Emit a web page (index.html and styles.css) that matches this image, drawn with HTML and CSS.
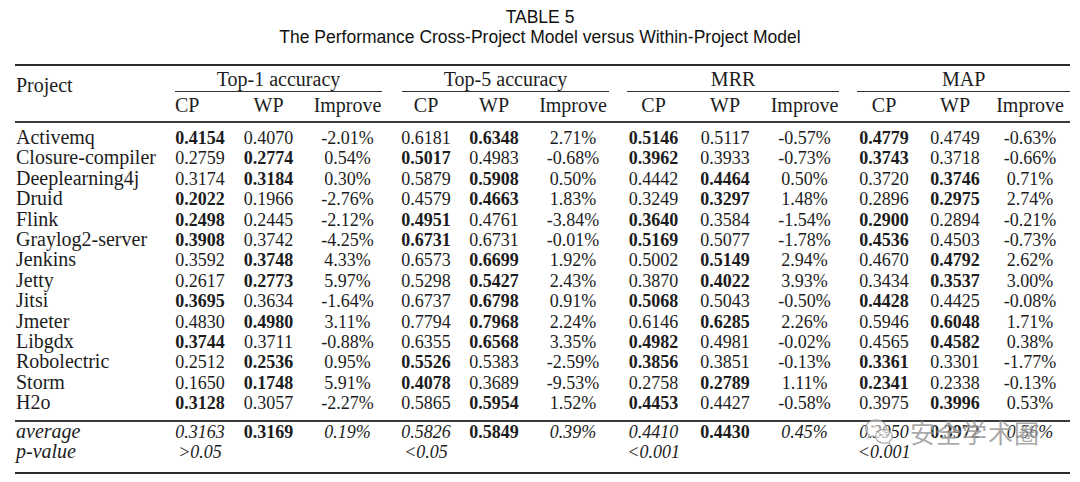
FILE: index.html
```html
<!DOCTYPE html>
<html lang="en">
<head>
<meta charset="utf-8">
<title>TABLE 5</title>
<link rel="stylesheet" href="styles.css">
</head>
<body>
<div class="caption">
  <div>TABLE 5</div>
  <div>The Performance Cross-Project Model versus Within-Project Model</div>
</div>
<div class="wrap">
<table class="results">
  <colgroup>
    <col class="c-proj"><col class="c68"><col class="c69"><col class="c89">
    <col class="c68"><col class="c68"><col class="c90">
    <col class="c71"><col class="c72"><col class="c87">
    <col class="c72"><col class="c70"><col class="c80">
  </colgroup>
  <thead>
    <tr class="grp">
      <th class="proj" rowspan="2">Project</th>
      <th colspan="3"><div class="cmid g1">Top-1 accuracy</div></th>
      <th colspan="3"><div class="cmid g2">Top-5 accuracy</div></th>
      <th colspan="3"><div class="cmid g3">MRR</div></th>
      <th colspan="3"><div class="cmid g4">MAP</div></th>
    </tr>
    <tr class="sub">
      <th class="left">CP</th><th>WP</th><th>Improve</th>
      <th>CP</th><th>WP</th><th>Improve</th>
      <th>CP</th><th>WP</th><th>Improve</th>
      <th>CP</th><th>WP</th><th>Improve</th>
    </tr>
  </thead>
  <tbody class="data">
    <tr><td class="name">Activemq</td><td class="n b">0.4154</td><td class="n">0.4070</td><td class="n">-2.01%</td><td class="n">0.6181</td><td class="n b">0.6348</td><td class="n">2.71%</td><td class="n b">0.5146</td><td class="n">0.5117</td><td class="n">-0.57%</td><td class="n b">0.4779</td><td class="n">0.4749</td><td class="n">-0.63%</td></tr>
    <tr><td class="name">Closure-compiler</td><td class="n">0.2759</td><td class="n b">0.2774</td><td class="n">0.54%</td><td class="n b">0.5017</td><td class="n">0.4983</td><td class="n">-0.68%</td><td class="n b">0.3962</td><td class="n">0.3933</td><td class="n">-0.73%</td><td class="n b">0.3743</td><td class="n">0.3718</td><td class="n">-0.66%</td></tr>
    <tr><td class="name">Deeplearning4j</td><td class="n">0.3174</td><td class="n b">0.3184</td><td class="n">0.30%</td><td class="n">0.5879</td><td class="n b">0.5908</td><td class="n">0.50%</td><td class="n">0.4442</td><td class="n b">0.4464</td><td class="n">0.50%</td><td class="n">0.3720</td><td class="n b">0.3746</td><td class="n">0.71%</td></tr>
    <tr><td class="name">Druid</td><td class="n b">0.2022</td><td class="n">0.1966</td><td class="n">-2.76%</td><td class="n">0.4579</td><td class="n b">0.4663</td><td class="n">1.83%</td><td class="n">0.3249</td><td class="n b">0.3297</td><td class="n">1.48%</td><td class="n">0.2896</td><td class="n b">0.2975</td><td class="n">2.74%</td></tr>
    <tr><td class="name">Flink</td><td class="n b">0.2498</td><td class="n">0.2445</td><td class="n">-2.12%</td><td class="n b">0.4951</td><td class="n">0.4761</td><td class="n">-3.84%</td><td class="n b">0.3640</td><td class="n">0.3584</td><td class="n">-1.54%</td><td class="n b">0.2900</td><td class="n">0.2894</td><td class="n">-0.21%</td></tr>
    <tr><td class="name">Graylog2-server</td><td class="n b">0.3908</td><td class="n">0.3742</td><td class="n">-4.25%</td><td class="n b">0.6731</td><td class="n">0.6731</td><td class="n">-0.01%</td><td class="n b">0.5169</td><td class="n">0.5077</td><td class="n">-1.78%</td><td class="n b">0.4536</td><td class="n">0.4503</td><td class="n">-0.73%</td></tr>
    <tr><td class="name">Jenkins</td><td class="n">0.3592</td><td class="n b">0.3748</td><td class="n">4.33%</td><td class="n">0.6573</td><td class="n b">0.6699</td><td class="n">1.92%</td><td class="n">0.5002</td><td class="n b">0.5149</td><td class="n">2.94%</td><td class="n">0.4670</td><td class="n b">0.4792</td><td class="n">2.62%</td></tr>
    <tr><td class="name">Jetty</td><td class="n">0.2617</td><td class="n b">0.2773</td><td class="n">5.97%</td><td class="n">0.5298</td><td class="n b">0.5427</td><td class="n">2.43%</td><td class="n">0.3870</td><td class="n b">0.4022</td><td class="n">3.93%</td><td class="n">0.3434</td><td class="n b">0.3537</td><td class="n">3.00%</td></tr>
    <tr><td class="name">Jitsi</td><td class="n b">0.3695</td><td class="n">0.3634</td><td class="n">-1.64%</td><td class="n">0.6737</td><td class="n b">0.6798</td><td class="n">0.91%</td><td class="n b">0.5068</td><td class="n">0.5043</td><td class="n">-0.50%</td><td class="n b">0.4428</td><td class="n">0.4425</td><td class="n">-0.08%</td></tr>
    <tr><td class="name">Jmeter</td><td class="n">0.4830</td><td class="n b">0.4980</td><td class="n">3.11%</td><td class="n">0.7794</td><td class="n b">0.7968</td><td class="n">2.24%</td><td class="n">0.6146</td><td class="n b">0.6285</td><td class="n">2.26%</td><td class="n">0.5946</td><td class="n b">0.6048</td><td class="n">1.71%</td></tr>
    <tr><td class="name">Libgdx</td><td class="n b">0.3744</td><td class="n">0.3711</td><td class="n">-0.88%</td><td class="n">0.6355</td><td class="n b">0.6568</td><td class="n">3.35%</td><td class="n b">0.4982</td><td class="n">0.4981</td><td class="n">-0.02%</td><td class="n">0.4565</td><td class="n b">0.4582</td><td class="n">0.38%</td></tr>
    <tr><td class="name">Robolectric</td><td class="n">0.2512</td><td class="n b">0.2536</td><td class="n">0.95%</td><td class="n b">0.5526</td><td class="n">0.5383</td><td class="n">-2.59%</td><td class="n b">0.3856</td><td class="n">0.3851</td><td class="n">-0.13%</td><td class="n b">0.3361</td><td class="n">0.3301</td><td class="n">-1.77%</td></tr>
    <tr><td class="name">Storm</td><td class="n">0.1650</td><td class="n b">0.1748</td><td class="n">5.91%</td><td class="n b">0.4078</td><td class="n">0.3689</td><td class="n">-9.53%</td><td class="n">0.2758</td><td class="n b">0.2789</td><td class="n">1.11%</td><td class="n b">0.2341</td><td class="n">0.2338</td><td class="n">-0.13%</td></tr>
    <tr><td class="name">H2o</td><td class="n b">0.3128</td><td class="n">0.3057</td><td class="n">-2.27%</td><td class="n">0.5865</td><td class="n b">0.5954</td><td class="n">1.52%</td><td class="n b">0.4453</td><td class="n">0.4427</td><td class="n">-0.58%</td><td class="n">0.3975</td><td class="n b">0.3996</td><td class="n">0.53%</td></tr>
  </tbody>
  <tbody class="summary">
    <tr><td class="name i">average</td><td class="n i">0.3163</td><td class="n b">0.3169</td><td class="n i">0.19%</td><td class="n i">0.5826</td><td class="n b">0.5849</td><td class="n i">0.39%</td><td class="n i">0.4410</td><td class="n b">0.4430</td><td class="n i">0.45%</td><td class="n i">0.3950</td><td class="n b">0.3972</td><td class="n i">0.56%</td></tr>
    <tr><td class="name i">p-value</td><td class="n i">&gt;0.05</td><td class="n"></td><td class="n"></td><td class="n i">&lt;0.05</td><td class="n"></td><td class="n"></td><td class="n i">&lt;0.001</td><td class="n"></td><td class="n"></td><td class="n i">&lt;0.001</td><td class="n"></td><td class="n"></td></tr>
  </tbody>
</table>
</div>
<div class="watermark">
  <svg class="wm-logo" width="30" height="28" viewBox="0 0 30 28">
    <path d="M12 2 C5.9 2 1.5 5.8 1.5 10.4 C1.5 13 2.9 15.2 5.1 16.7 L4.2 19.8 L7.8 17.9 C9.1 18.3 10.5 18.6 12 18.6 C18.1 18.6 22.5 14.9 22.5 10.4 C22.5 5.8 18.1 2 12 2 Z" fill="rgba(255,255,255,0.7)" stroke="#a8a8a8" stroke-width="1.3"/>
    <circle cx="8.5" cy="8.5" r="1.3" fill="#a8a8a8"/>
    <circle cx="15" cy="8.5" r="1.3" fill="#a8a8a8"/>
    <path d="M20 11.5 C15.1 11.5 11.5 14.5 11.5 18.3 C11.5 22.1 15.1 25.1 20 25.1 C21 25.1 22 24.9 22.9 24.6 L25.8 26.2 L25.1 23.6 C27 22.4 28.5 20.5 28.5 18.3 C28.5 14.5 24.9 11.5 20 11.5 Z" fill="rgba(255,255,255,0.75)" stroke="#a8a8a8" stroke-width="1.3"/>
    <circle cx="17.3" cy="16.8" r="1.1" fill="#a8a8a8"/>
    <circle cx="22.7" cy="16.8" r="1.1" fill="#a8a8a8"/>
  </svg>
  <span class="wm-text">安全学术圈</span>
</div>
</body>
</html>
```
FILE: styles.css
```css
html, body {
  margin: 0;
  padding: 0;
  background: #ffffff;
}
body {
  position: relative;
  width: 1080px;
  height: 482px;
  overflow: hidden;
  color: #1c1c1c;
  font-family: "Liberation Serif", "Times New Roman", serif;
}
.caption {
  padding-top: 6.7px;
  text-align: center;
  font-family: "Liberation Sans", Arial, sans-serif;
  font-size: 17.5px;
  line-height: 20.5px;
  color: #111;
}
.wrap {
  padding: 16.3px 10px 0 15px;
}
.results {
  width: 1055px;
  table-layout: fixed;
  border-collapse: separate;
  border-spacing: 0;
  border-top: 2px solid #2a2a2a;
}
.c-proj { width: 151px; }
.c68 { width: 68px; }
.c69 { width: 69px; }
.c70 { width: 70px; }
.c71 { width: 71px; }
.c72 { width: 72px; }
.c80 { width: 80px; }
.c87 { width: 87px; }
.c89 { width: 89px; }
.c90 { width: 90px; }
.results th,
.results td {
  padding: 0;
  font-weight: normal;
  white-space: nowrap;
  text-align: center;
  vertical-align: top;
}
.results th {
  font-size: 20px;
  line-height: 20.4px;
}
.grp th {
  padding-top: 3px;
}
.cmid {
  padding-bottom: 1.6px;
  border-bottom: 1px solid #333;
}
.g1 { margin: 0 10px 0 9px; }
.g2 { margin: 0 9px 0 10px; }
.g3 { margin: 0 9px 0 9px; }
.g4 { margin: 0 0 0 9px; }
.sub th {
  padding-top: 3px;
  padding-bottom: 6px;
  border-bottom: 2px solid #3a3a3a;
}
.sub th.left {
  text-align: left;
  padding-left: 9px;
}
.results th.proj {
  text-align: left;
  padding: 9px 0 0 1px;
  border-bottom: 2px solid #3a3a3a;
}
.results td.name {
  text-align: left;
  padding-left: 1px;
  font-size: 20px;
  line-height: 20.4px;
}
.results td.n {
  font-size: 18px;
  line-height: 18.4px;
  padding-top: 2px;
}
.results .b { font-weight: bold; }
.results .i { font-style: italic; }
.data tr:first-child td.name {
  padding-top: 3.6px;
}
.data tr:first-child td.n {
  padding-top: 5.6px;
}
.data tr:last-child td {
  padding-bottom: 7.4px;
  border-bottom: 2px solid #3a3a3a;
}
.summary td.name {
  line-height: 19.6px;
}
.summary td.n {
  line-height: 17.6px;
}
.summary tr:last-child td {
  padding-bottom: 10.5px;
  border-bottom: 2px solid #2a2a2a;
}
.watermark {
  position: absolute;
  left: 864px;
  top: 417px;
  display: flex;
  align-items: center;
  gap: 16px;
  pointer-events: none;
}
.wm-logo {
  display: block;
  opacity: 0.85;
}
.wm-text {
  font-family: "Noto Sans CJK SC", sans-serif;
  font-size: 25px;
  line-height: 30px;
  letter-spacing: 1px;
  color: rgba(110, 110, 110, 0.6);
  text-shadow: 0 0 2px rgba(255, 255, 255, 0.9);
}
```
